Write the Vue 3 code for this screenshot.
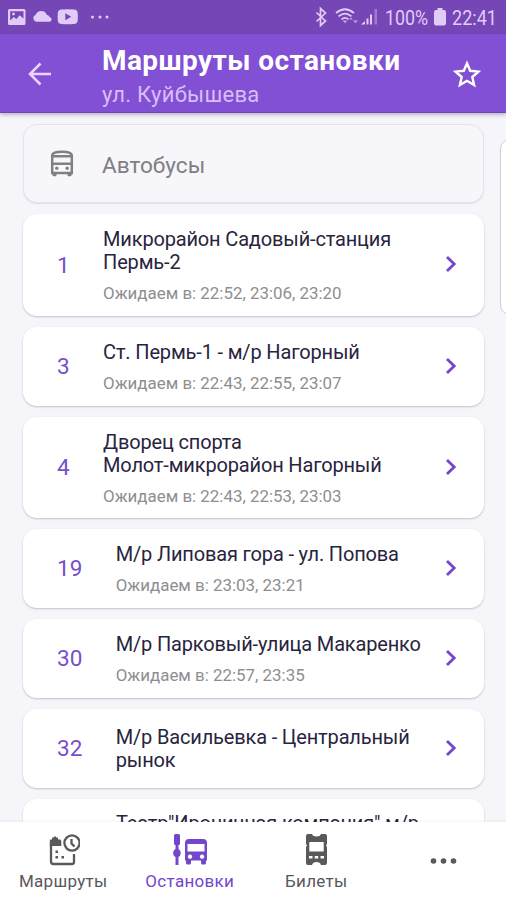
<script setup>
const routes = [
  { n: '1', lines: ['Микрорайон Садовый-станция', 'Пермь-2'], times: '22:52, 23:06, 23:20', h: 102 },
  { n: '3', lines: ['Ст. Пермь-1 - м/р Нагорный'], times: '22:43, 22:55, 23:07', h: 79 },
  { n: '4', lines: ['Дворец спорта', 'Молот-микрорайон Нагорный'], times: '22:43, 22:53, 23:03', h: 101 },
  { n: '19', lines: ['М/р Липовая гора - ул. Попова'], times: '23:03, 23:21', h: 79 },
  { n: '30', lines: ['М/р Парковый-улица Макаренко'], times: '22:57, 23:35', h: 79 },
  { n: '32', lines: ['М/р Васильевка - Центральный', 'рынок'], times: '', h: 79 },
]
</script>

<template>
  <div class="screen">
    <div class="status">
      <svg class="s-left" width="112" height="34" viewBox="0 0 112 34">
        <path fill-rule="evenodd" d="M9.500 9h14.500q1.500 0 1.500 1.500v13q0 1.500-1.500 1.500h-14.500q-1.500 0-1.500-1.500v-13q0-1.500 1.500-1.500zM10.200 11.200v9.300l3.600-3.500 2.500 2 3.500-3.800 3.700 3.300v-7.300z" />
        <circle cx="13.500" cy="14" r="1.400" />
        <path d="M36.500 21.800a3.700 3.700 0 0 1-.8-7.100 6 6 0 0 1 11.200 0.200q2 0 2.700 2 2.200.6 2 2.700-.3 2.200-2.400 2.200z" />
        <path fill-rule="evenodd" d="M61.500 9.500q6-.6 12.500 0 3.500.2 3.700 3.500.3 4 0 7.500-.2 3.300-3.700 3.500-6.500.5-12.500 0-3.500-.2-3.700-3.500-.3-3.500 0-7.500.2-3.300 3.700-3.500zM65.300 13.300v7l6-3.500z" />
        <circle cx="92.500" cy="17" r="1.500" /><circle cx="100" cy="17" r="1.500" /><circle cx="107" cy="17" r="1.500" />
      </svg>
      <div class="s-right">
        <svg width="64" height="34" viewBox="0 0 64 34">
          <path class="ln" d="M1.500 12.500l9 8.500-5 4.500v-17l5 4.500-9 8.500" />
          <path class="ln" d="M21 13q9-7.500 18 0M23.500 16.300q6.500-5.500 13 0M26.500 19.300q3.500-3 7 0" />
          <path d="M27.500 20.500h5l-2.500 2.800zM34 19.500l2-2 2 2zM38 20.500h5l-2.500 2.500z" opacity=".7" />
          <path d="M46 24.500l4-3.500v3.500zM51.500 18.500h2v6h-2zM55 14.500h2v10h-2z" />
          <path d="M59.500 9h2.500v15.500h-2.500z" opacity=".4" />
        </svg>
        <span class="pct">100%</span>
        <svg class="bat" width="12" height="34" viewBox="0 0 12 34"><path d="M3.500 8h5v2h1.500q2 0 2 2v11.500q0 2-2 2h-8q-2 0-2-2v-11.500q0-2 2-2h1.500z" /></svg>
        <span class="clock">22:41</span>
      </div>
    </div>

    <header class="bar">
      <svg class="back" width="24" height="24" viewBox="0 0 24 24"><path d="M23 12H2M12.500 1.500L2 12l10.500 10.500" /></svg>
      <div class="heads">
        <h1>Маршруты остановки</h1>
        <p>ул. Куйбышева</p>
      </div>
      <svg class="star" width="28" height="28" viewBox="0 0 28 28"><path d="M14 3.300l3.200 7.500 8.300.8-6.200 5.400 1.800 8.100-7.100-4.300-7.100 4.300 1.800-8.100-6.200-5.400 8.300-.8z" /></svg>
    </header>

    <main class="list">
      <div class="next-page"></div>
      <section class="card kind">
        <svg width="24" height="28" viewBox="0 0 24 28">
          <path class="o" d="M2.200 23V5.500Q2.200 1.700 12 1.700t9.800 3.800V23zM2.300 6.300h19.400M2.300 13.800h19.400" />
          <circle cx="6.800" cy="18.300" r="1.700" /><circle cx="17.200" cy="18.300" r="1.700" />
          <path d="M2 22h4.500v3.300q0 1-1 1h-2q-1 0-1-1zM17.500 22H22l-.5 3.300q0 1-1 1h-2q-1 0-1-1z" />
        </svg>
        <span>Автобусы</span>
      </section>
      <section v-for="r in routes" :key="r.n" class="card route" :style="{ height: r.h + 'px' }">
        <span class="num">{{ r.n }}</span>
        <div class="info">
          <div class="name"><div v-for="l in r.lines" :key="l">{{ l }}</div></div>
          <div v-if="r.times" class="times">Ожидаем в: {{ r.times }}</div>
        </div>
        <svg class="chev" width="12" height="18" viewBox="0 0 12 18"><path d="M2 2l7.200 7L2 16" /></svg>
      </section>
      <section class="card peek">
        <div class="name">Театр"Ироничная компания" м/р</div>
      </section>
    </main>

    <nav class="tabs">
      <div class="tab">
        <svg width="34" height="34" viewBox="0 0 34 34">
          <path d="M3.800 13V7.500q0-1 1.200-1h1V4.500h2v-1h2v1h2v2h2.500l.8 1.500v5z" />
          <path class="o" d="M5 11v17.500q0 2.500 2.500 2.500h18.500q2 0 2-2v-8" />
          <circle class="o" cx="26" cy="10" r="7.600" />
          <path class="o" d="M25.500 6v4.500l3 3" />
          <path d="M9.500 17.500h2.500v2.500H9.500zM9.500 23h2.500v2.500H9.500zM15.500 23H18v2.500h-2.500z" />
        </svg>
        <span>Маршруты</span>
      </div>
      <div class="tab on">
        <svg width="36" height="34" viewBox="0 0 36 34">
          <path d="M3.500 1h3Q8 1 8 2.500v8Q8 12 6.500 12v4q2 1 2.300 4-.3 3-2.300 4v8h-3v-8Q1.300 23 1 20q.3-3 2.500-4v-4Q2 12 2 10.500v-8Q2 1 3.500 1z" />
          <path fill-rule="evenodd" d="M17 6h14q4 0 4 4v17.500h-1v2.500q0 1.500-1.500 1.500h-2Q29 31.500 29 30v-2.500H19v2.500q0 1.500-1.500 1.500h-2q-1.500 0-1.500-1.500v-2.500h-1V10q0-4 4-4zM15.500 11v7.500h17V11zM18 21.500a2.200 2.200 0 1 0 .1 0zM30 21.500a2.200 2.200 0 1 0 .1 0z" />
        </svg>
        <span>Остановки</span>
      </div>
      <div class="tab">
        <svg width="24" height="34" viewBox="0 0 24 34">
          <path fill-rule="evenodd" d="M4 1h4q.8 2.500 4.500 2.500T17 1h4q2 0 2 2v8l-1 1.500 1 1.500v16q0 2-2 2h-4q-.8-3-4.500-3T8 32H4q-2 0-2-2V14l1-1.500-1-1.500V3q0-2 2-2zM5.300 9v9.500h14.400V9zM5 23v2.500h3.500V23zm5.700 0v2.500h3.500V23zm5.800 0v2.500H20V23z" />
        </svg>
        <span>Билеты</span>
      </div>
      <div class="tab more">
        <svg width="28" height="8" viewBox="0 0 28 8"><circle cx="4.500" cy="4" r="2.800" /><circle cx="14.500" cy="4" r="2.800" /><circle cx="24.500" cy="4" r="2.800" /></svg>
      </div>
    </nav>
  </div>
</template>

<style>
body { margin: 0; overflow: hidden; }
</style>

<style scoped>
.screen {
  width: 506px;
  height: 900px;
  display: flex;
  flex-direction: column;
  background: #f6f5fa;
  font-family: Roboto, "Noto Sans", sans-serif;
  overflow: hidden;
}
svg { flex: none; display: block; }
.status {
  height: 34px;
  flex: none;
  display: flex;
  justify-content: space-between;
  background: #7446b6;
  color: #e1cbf7;
  fill: #e1cbf7;
}
.s-right { display: flex; align-items: center; padding-right: 10px; }
.ln { fill: none; stroke: #e1cbf7; stroke-width: 1.7; }
.pct, .clock { font-size: 21px; line-height: 34px; padding-top: 1px; white-space: nowrap; transform-origin: 0 50%; }
.pct { width: 43px; margin-left: 6px; transform: scaleX(.85); }
.bat { margin-left: 6px; }
.clock { width: 44px; margin-left: 6px; transform: scaleX(.86); }
.bar {
  height: 79px;
  flex: none;
  display: flex;
  background: #8150d4;
  border-bottom: 1px solid #7441cb;
  box-sizing: border-box;
  box-shadow: 0 2px 4px rgba(0, 0, 0, .25);
  z-index: 1;
}
.back { margin: 28px 0 0 28px; }
.back path { fill: none; stroke: #ead5ff; stroke-width: 2.5; }
.heads { margin-left: 50px; flex: 1; padding-top: 10px; }
h1 { margin: 0; font-size: 28px; line-height: 33px; font-weight: 700; letter-spacing: .41px; color: #fff; white-space: nowrap; }
p { margin: 0; padding-top: 5px; font-size: 22px; line-height: 26px; letter-spacing: .27px; color: #d9bdf8; }
.star { margin: 26px 25px 0 0; }
.star path { fill: none; stroke: #fff; stroke-width: 2.4; stroke-linejoin: miter; }
.list {
  position: relative;
  flex: 1;
  min-height: 0;
  overflow: hidden;
  padding: 11px 22px 0 23px;
  display: flex;
  flex-direction: column;
  gap: 11px;
}
.next-page {
  position: absolute;
  left: 500px;
  top: 26px;
  width: 30px;
  height: 176px;
  border: 1px solid #cfced4;
  border-radius: 10px;
  background: #fff;
  box-sizing: border-box;
}
.card {
  flex: none;
  box-sizing: border-box;
  display: flex;
  align-items: center;
  border-radius: 14px;
  background: #fff;
  box-shadow: 0 1px 2px rgba(40, 35, 60, .25);
}
.kind {
  height: 79px;
  padding-left: 26px;
  background: #f7f6fb;
  border: 1px solid #e5e4ea;
  box-shadow: 0 1px 1px rgba(40, 35, 60, .1);
  color: #808083;
  fill: #808083;
  font-size: 22.6px;
}
.kind .o { fill: none; stroke: #808083; stroke-width: 2.5; }
.kind span { margin-left: 28px; padding-top: 3px; }
.route { padding: 0 27px 2px 34px; }
.num { font-size: 22.5px; color: #7650cb; padding-top: 1px; }
.info { margin-left: 33.4px; flex: 1; min-width: 0; padding-top: 3px; }
.name { font-size: 20px; line-height: 23px; letter-spacing: -.16px; color: #28243e; white-space: nowrap; }
.times { margin-top: 9px; font-size: 16.9px; line-height: 20px; color: #8e8e91; white-space: nowrap; }
.chev path { fill: none; stroke: #7446cc; stroke-width: 2.8; }
.peek { height: 79px; align-items: flex-start; padding: 13px 0 0 93px; }
.tabs {
  height: 78px;
  flex: none;
  display: grid;
  grid-template-columns: repeat(4, 1fr);
  background: #fff;
  box-shadow: 0 -1px 2px rgba(40, 35, 60, .05);
  z-index: 1;
}
.tab {
  display: flex;
  flex-direction: column;
  align-items: center;
  padding-top: 11px;
  color: #59585a;
  fill: #59585a;
  font-size: 17px;
  line-height: 22px;
  letter-spacing: .3px;
}
.tab span { padding-top: 3px; }
.tab .o { fill: none; stroke: #59585a; stroke-width: 2.3; }
.tab.on { color: #7446cc; fill: #7446cc; }
.tab.more { padding-top: 35px; }
</style>
